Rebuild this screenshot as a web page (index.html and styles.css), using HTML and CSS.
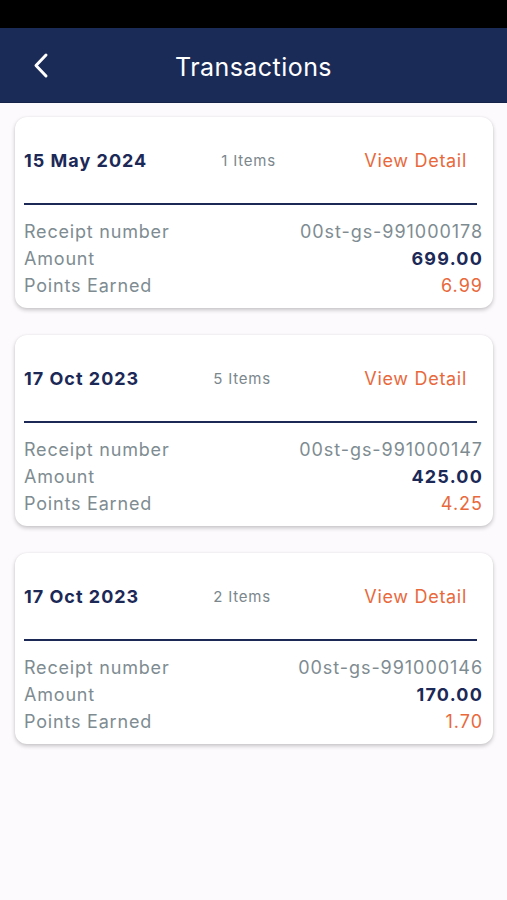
FILE: index.html
```html
<!DOCTYPE html>
<html>
<head>
<meta charset="utf-8">
<link rel="stylesheet" href="styles.css">
</head>
<body>
<div class="status"></div>
<header class="nav">
  <span class="back"><svg width="20" height="28" viewBox="0 0 20 28"><path d="M14 3 L4 13.5 L14 24" fill="none" stroke="#fff" stroke-width="3" stroke-linecap="round" stroke-linejoin="round"/></svg></span>
  <h1 class="title">Transactions</h1>
</header>
<main class="list">
  <section class="card">
    <div class="head"><span class="date">15 May 2024</span><span class="items">1 Items</span><span class="view">View Detail</span></div>
    <div class="divider"></div>
    <div class="row"><span class="lbl">Receipt number</span><span class="rcpt">00st-gs-991000178</span></div>
    <div class="row"><span class="lbl">Amount</span><span class="amt">699.00</span></div>
    <div class="row"><span class="lbl">Points Earned</span><span class="pts">6.99</span></div>
  </section>
  <section class="card">
    <div class="head"><span class="date">17 Oct 2023</span><span class="items">5 Items</span><span class="view">View Detail</span></div>
    <div class="divider"></div>
    <div class="row"><span class="lbl">Receipt number</span><span class="rcpt">00st-gs-991000147</span></div>
    <div class="row"><span class="lbl">Amount</span><span class="amt">425.00</span></div>
    <div class="row"><span class="lbl">Points Earned</span><span class="pts">4.25</span></div>
  </section>
  <section class="card">
    <div class="head"><span class="date">17 Oct 2023</span><span class="items">2 Items</span><span class="view">View Detail</span></div>
    <div class="divider"></div>
    <div class="row"><span class="lbl">Receipt number</span><span class="rcpt">00st-gs-991000146</span></div>
    <div class="row"><span class="lbl">Amount</span><span class="amt">170.00</span></div>
    <div class="row"><span class="lbl">Points Earned</span><span class="pts">1.70</span></div>
  </section>
</main>
</body>
</html>
```
FILE: styles.css
```css
html, body { margin: 0; padding: 0; }
body {
  background: #fdfafd;
  font-family: Inter, "Noto Sans", sans-serif;
  width: 507px;
  height: 900px;
  overflow: hidden;
}
.status { height: 28px; background: #000; }
.nav {
  height: 75px;
  background: #1b2b58;
  border-bottom: 1px solid #14224a;
  box-sizing: border-box;
  display: flex;
  align-items: center;
  position: relative;
}
.back { display: flex; margin-left: 32px; margin-top: 1px; }
.title {
  margin: 0;
  position: absolute;
  left: 0; right: 0;
  top: 24px;
  text-align: center;
  color: #fff;
  font-weight: 400;
  font-size: 25px;
  line-height: 30px;
  letter-spacing: 0.45px;
  pointer-events: none;
}
.list {
  padding: 14px 14px 0 15px;
  display: flex;
  flex-direction: column;
  gap: 27px;
}
.card {
  background: #fff;
  border-radius: 12px;
  box-shadow: 0 2px 4px rgba(0,0,0,0.22), 0 0 2px rgba(0,0,0,0.06);
  padding: 0 10px 10px 9px;
  height: 191px;
  box-sizing: border-box;
}
.head {
  height: 86px;
  display: flex;
  align-items: center;
  padding-right: 16px;
}
.date {
  color: #1c2957;
  font-weight: 700;
  font-size: 18px;
  letter-spacing: 1px;
}
.items {
  margin-left: 74px;
  color: #7b878d;
  font-size: 15px;
  letter-spacing: 0.8px;
}
.view {
  margin-left: auto;
  color: #e8693c;
  font-size: 18px;
  letter-spacing: 0.7px;
}
.divider {
  height: 2px;
  background: #1c2957;
  margin-right: 6px;
  margin-bottom: 13px;
}
.row {
  display: flex;
  justify-content: space-between;
  line-height: 27px;
  font-size: 18px;
  letter-spacing: 0.8px;
}
.lbl { color: #7e8c92; }
.rcpt { color: #7e8c92; letter-spacing: 0.95px; }
.amt { color: #1c2957; font-weight: 700; letter-spacing: 1.2px; }
.pts { color: #e8693c; letter-spacing: 1px; }
```
